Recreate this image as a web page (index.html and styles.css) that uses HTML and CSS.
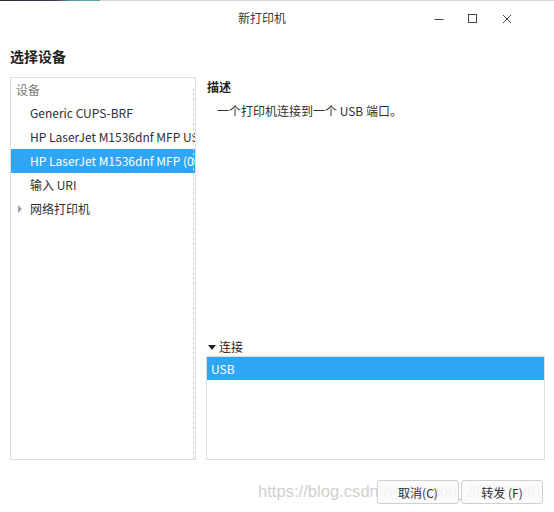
FILE: index.html
```html
<!DOCTYPE html>
<html lang="zh">
<head>
<meta charset="utf-8">
<title>新打印机</title>
<link rel="stylesheet" href="styles.css">
</head>
<body>
<div class="window">
  <div class="topline"></div>
  <header class="titlebar">
    <span class="title">新打印机</span>
    <div class="controls">
      <svg class="ctl" width="12" height="12" viewBox="0 0 12 12"><path d="M1.5 6.5h9" stroke="#444" stroke-width="1"/></svg>
      <svg class="ctl" width="12" height="12" viewBox="0 0 12 12"><rect x="1.5" y="1.5" width="8" height="8" fill="none" stroke="#444" stroke-width="1"/></svg>
      <svg class="ctl" width="12" height="12" viewBox="0 0 12 12"><path d="M2 2l8 8M10 2l-8 8" stroke="#444" stroke-width="1"/></svg>
    </div>
  </header>
  <h1 class="heading">选择设备</h1>
  <main class="content">
    <div class="devices">
      <div class="dev-header">设备</div>
      <div class="dev-item">Generic CUPS-BRF</div>
      <div class="dev-item">HP LaserJet M1536dnf MFP USB</div>
      <div class="dev-item selected">HP LaserJet M1536dnf MFP (0023)</div>
      <div class="dev-item">输入 URI</div>
      <div class="dev-item tree"><span class="arrow-r"></span>网络打印机</div>
    </div>
    <div class="details">
      <div class="label">描述</div>
      <div class="desc">一个打印机连接到一个 USB 端口。</div>
      <div class="spacer"></div>
      <div class="conn-label"><span class="arrow-d"></span>连接</div>
      <div class="conn-box">
        <div class="conn-item selected">USB</div>
      </div>
    </div>
  </main>
  <div class="watermark">https://blog.csdn.net/weixin_39920980</div>
  <footer class="buttons">
    <button class="btn">取消(C)</button>
    <button class="btn">转发 (F)</button>
  </footer>
</div>
</body>
</html>
```
FILE: styles.css
```css
* { box-sizing: border-box; }
html, body { margin: 0; padding: 0; background: #fff; }
body {
  font-family: "Noto Sans CJK SC", "Noto Sans", sans-serif;
  font-size: 12px;
  color: #2f2f2f;
}
.window {
  position: relative;
  width: 554px;
  height: 512px;
  overflow: hidden;
  display: flex;
  flex-direction: column;
}
.topline {
  height: 1px;
  background: linear-gradient(90deg, #2a2433 0%, #4a3550 55%, #5a9aa0 70%, #5fa6a8 100%);
  background-size: 100px 1px;
  background-repeat: no-repeat;
  background-color: #d8d8d8;
}
.titlebar {
  height: 34px;
  display: flex;
  align-items: center;
  position: relative;
}
.title {
  position: absolute;
  left: 238px;
  top: 8px;
  font-size: 12px;
  color: #3a3a3a;
}
.controls {
  margin-left: auto;
  display: flex;
  gap: 22px;
  padding-right: 41px;
  margin-top: 1px;
}
.heading {
  margin: 11px 0 0 10px;
  font-size: 14px;
  font-weight: bold;
  color: #1e1e1e;
  line-height: 20px;
  height: 20px;
}
.content {
  display: flex;
  gap: 10px;
  margin: 11px 0 0 10px;
  height: 383px;
}
.devices {
  width: 186px;
  border: 1px solid #dedede;
  overflow: hidden;
  white-space: nowrap;
  position: relative;
}
.devices::after {
  content: "";
  position: absolute;
  right: 1px;
  top: 10px;
  bottom: 0;
  border-right: 1px dashed #d4d4d4;
}
.dev-header {
  height: 23px;
  line-height: 23px;
  padding-left: 5px;
  color: #7a7a7a;
}
.dev-item {
  height: 24px;
  line-height: 24px;
  padding-left: 19px;
  color: #2f2f2f;
}
.dev-item.selected, .conn-item.selected {
  background: #2ea6f4;
  color: #fff;
}
.dev-item.tree { padding-left: 7px; display: flex; align-items: center; }
.arrow-r {
  width: 0; height: 0;
  border-top: 4px solid transparent;
  border-bottom: 4px solid transparent;
  border-left: 4px solid #a0a0a0;
  margin-right: 8px;
}
.details {
  width: 339px;
  display: flex;
  flex-direction: column;
}
.label {
  font-weight: bold;
  color: #1e1e1e;
  line-height: 20px;
  padding-left: 1px;
}
.desc {
  padding-left: 11px;
  line-height: 20px;
  margin-top: 4px;
}
.spacer { flex: 1; }
.conn-label {
  display: flex;
  align-items: center;
  line-height: 18px;
  padding-left: 2px;
  color: #1e1e1e;
}
.arrow-d {
  width: 0; height: 0;
  border-left: 4px solid transparent;
  border-right: 4px solid transparent;
  border-top: 5px solid #222;
  margin-right: 3px;
}
.conn-box {
  height: 104px;
  border: 1px solid #dedede;
}
.conn-item {
  height: 23px;
  line-height: 23px;
  padding-left: 4px;
}
.buttons {
  display: flex;
  justify-content: flex-end;
  gap: 2px;
  margin: 20px 11px 0 0;
  position: relative;
  z-index: 1;
}
.btn {
  width: 82px;
  height: 24px;
  border: 1px solid #cfcfcf;
  border-radius: 3px;
  background: rgba(250, 250, 250, 0.8);
  font-family: "Noto Sans CJK SC", "Noto Sans", sans-serif;
  font-size: 12px;
  color: #2f2f2f;
  padding: 0;
}
.watermark {
  position: absolute;
  left: 258px;
  top: 482px;
  font-family: "Liberation Sans", Arial, sans-serif;
  font-size: 16.6px;
  color: #d0d0d0;
  white-space: nowrap;
  pointer-events: none;
  z-index: 0;
}
```
